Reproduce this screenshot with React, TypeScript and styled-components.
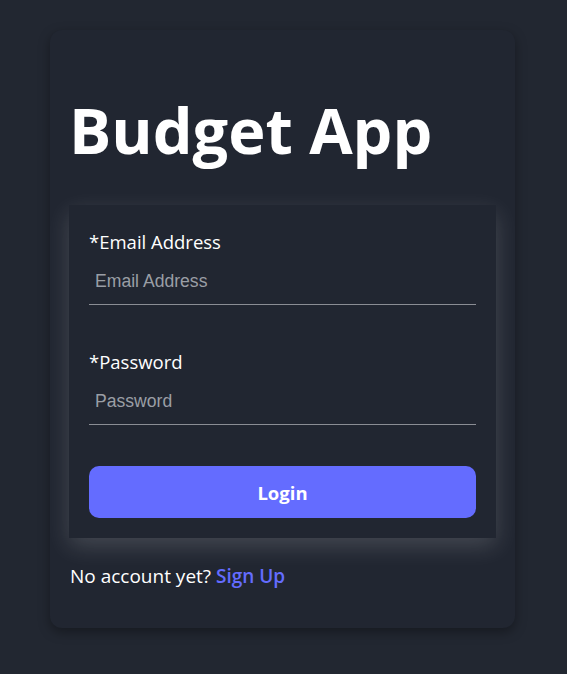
import * as React from 'react';
import styled, { createGlobalStyle } from 'styled-components';

const GlobalStyle = createGlobalStyle`
  body {
    margin: 0;
    background-color: #222731;
    font-family: 'Open Sans', 'Noto Sans', sans-serif;
    color: #ffffff;
  }
`;

const Page = styled.div`
  display: flex;
  justify-content: center;
  align-items: flex-start;
  padding: 30px 2px 0 0;
  min-height: 674px;
  box-sizing: border-box;
`;

const Card = styled.div`
  width: 465px;
  box-sizing: border-box;
  padding: 20px 19px 39px 19px;
  background-color: #212631;
  border-radius: 12px;
  box-shadow: 0 4px 12px rgba(0, 0, 0, 0.35);
`;

const Title = styled.h1`
  margin: 42px 0 37px 0;
  font-size: 63px;
  font-weight: 700;
  line-height: 76px;
  letter-spacing: 0;
`;

const FormBox = styled.form`
  display: flex;
  flex-direction: column;
  padding: 24px 20px 20px 20px;
  background-color: #212631;
  box-shadow: 0 8px 22px rgba(255, 255, 255, 0.16);
`;

const Field = styled.div<{ last?: boolean }>`
  display: flex;
  flex-direction: column;
  margin-bottom: ${(p) => (p.last ? '41px' : '44px')};
`;

const Label = styled.label`
  font-size: 18.5px;
  line-height: 26px;
`;

const Input = styled.input`
  margin-top: 8px;
  padding: 8px 6px 13px 6px;
  line-height: 20px;
  background: transparent;
  border: none;
  border-bottom: 1px solid #8a8d94;
  color: #ffffff;
  font-family: 'Liberation Sans', Arial, sans-serif;
  font-size: 17.6px;
  outline: none;
  &::placeholder {
    color: #9a9ea5;
  }
`;

const LoginButton = styled.button`
  height: 52px;
  border: none;
  border-radius: 10px;
  background-color: #646cff;
  color: #ffffff;
  font-family: 'Open Sans', 'Noto Sans', sans-serif;
  font-size: 18.5px;
  font-weight: 700;
  cursor: pointer;
`;

const Footer = styled.p`
  margin: 25px 0 0 1px;
  font-size: 19px;
  line-height: 26px;
`;

const SignUp = styled.a`
  color: #646cff;
  font-weight: 600;
  text-decoration: none;
`;

export default function App() {
  return (
    <>
      <GlobalStyle />
      <Page>
        <Card>
          <Title>Budget App</Title>
          <FormBox onSubmit={(e) => e.preventDefault()}>
            <Field>
              <Label>*Email Address</Label>
              <Input type="email" placeholder="Email Address" />
            </Field>
            <Field last>
              <Label>*Password</Label>
              <Input type="password" placeholder="Password" />
            </Field>
            <LoginButton type="submit">Login</LoginButton>
          </FormBox>
          <Footer>
            No account yet? <SignUp href="#">Sign Up</SignUp>
          </Footer>
        </Card>
      </Page>
    </>
  );
}
